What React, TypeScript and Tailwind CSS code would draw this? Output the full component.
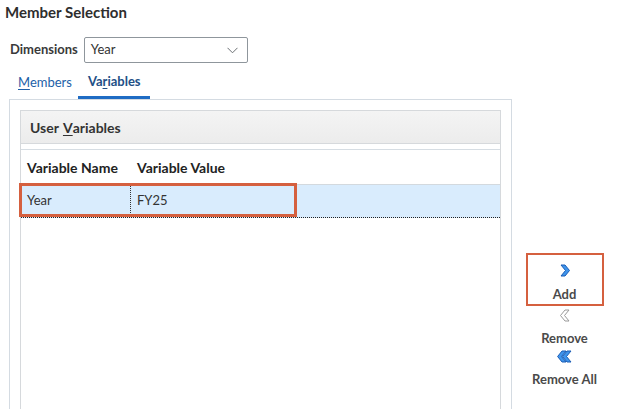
import React from 'react';

const Chevron = ({ dir, tone }: { dir: 'left' | 'right'; tone: 'blue' | 'gray' }) => {
  const pts = dir === 'right' ? '1,1 5,1 9.5,6.5 5,12 1,12 5.5,6.5' : '9,1 5,1 0.5,6.5 5,12 9,12 4.5,6.5';
  return (
    <svg width="10" height="13" viewBox="0 0 10 13">
      <polygon
        points={pts}
        fill={tone === 'blue' ? '#3f95ec' : '#ffffff'}
        stroke={tone === 'blue' ? '#1b5cb5' : '#9a9a9a'}
        strokeWidth="1"
        strokeLinejoin="round"
      />
    </svg>
  );
};

const DoubleLeft = () => (
  <svg width="15" height="13" viewBox="0 0 15 13">
    <polygon points="14,1 10,1 5.5,6.5 10,12 14,12 9.5,6.5" fill="#3f95ec" stroke="#1b5cb5" strokeLinejoin="round" />
    <polygon points="9,1 5,1 0.6,6.5 5,12 9,12 4.5,6.5" fill="#3f95ec" stroke="#1b5cb5" strokeLinejoin="round" />
  </svg>
);

export default function App() {
  return (
    <div className="w-[617px] h-[409px] overflow-hidden bg-white font-['Lato',sans-serif] text-[#333]">
      {/* titulo */}
      <h1 className="pl-[5px] pt-[3px] text-[15px] font-bold leading-[18px] text-[#2e2e2e]">Member Selection</h1>

      <div className="mt-[16px] flex items-center pl-[10px]">
        <span className="text-[13px] font-bold text-[#3a3a3a]">Dimensions</span>
        <div className="ml-[6px] flex h-[26px] w-[164px] items-center justify-between rounded-[2px] border border-[#8f969c] pl-[6px] pr-[9px]">
          <span className="text-[13px] text-[#333]">Year</span>
          <svg width="11" height="7" viewBox="0 0 11 7">
            <path d="M0.5 0.8 L5.5 5.8 L10.5 0.8" fill="none" stroke="#6b6f73" strokeWidth="1" />
          </svg>
        </div>
      </div>

      {/* tabs */}
      <div className="mt-[3px] flex h-[33px] pl-[8px]">
        <div className="flex items-center pl-[10px] pr-[6px] text-[13px] text-[#1d5fa8]">
          <span><span className="underline underline-offset-2">M</span>embers</span>
        </div>
        <div className="flex items-center border-b-[3px] border-[#1f6cc4] pl-[10px] pr-[9px] pt-[2px] text-[13px] font-bold text-[#224f86]">
          <span>Va<span className="underline underline-offset-2">r</span>iables</span>
        </div>
      </div>

      <div className="flex">
        {/* panel externo */}
        <div className="ml-[9px] h-[310px] w-[503px] border-x border-t border-[#d4dbe2] px-[10px] pt-[10px]">
          <div className="h-full border-x border-t border-[#d6d9dc]">
            <div className="flex h-[33px] items-center border-b border-[#d6d9dc] bg-gradient-to-b from-[#f4f4f4] to-[#ececec] pl-[9px] text-[14px] font-bold text-[#333]">
              User <span className="ml-[4px] underline underline-offset-2">V</span>ariables
            </div>
            <div className="mt-[5px] border-t border-[#d6dde3]">
              <div className="flex h-[34px] items-center text-[14px] font-bold text-[#222]">
                <div className="w-[110px] pl-[6px]">Variable Name</div>
                <div className="pl-[6px]">Variable Value</div>
              </div>
              <div className="relative flex h-[34px] items-center border-t border-[#d3d9de] border-b border-b-[#222] border-dotted bg-[#d9ecfd] text-[13px] text-[#333]" style={{ borderTopStyle: 'solid' }}>
                <div className="flex h-full w-[110px] items-center border-r border-dotted border-[#333] pl-[6px]">Year</div>
                <div className="pl-[6px]">FY25</div>
                <div className="absolute left-[-2px] top-[-2px] h-[34px] w-[278px] border-[3px] border-[#d5603f]" />
              </div>
            </div>
          </div>
        </div>

        {/* botoes */}
        <div className="flex flex-1 flex-col items-center pt-[154px] text-[13px] font-bold leading-[16px] text-[#4a4a4a]">
          <div className="flex h-[53px] w-[78px] flex-col items-center border-2 border-[#d5603f] pt-[9px]">
            <Chevron dir="right" tone="blue" />
            <span className="mt-[9px]">Add</span>
          </div>
          <div className="mt-[3px] h-[13px]"><Chevron dir="left" tone="gray" /></div>
          <span className="mt-[8px]">Remove</span>
          <div className="mt-[4px] h-[13px]"><DoubleLeft /></div>
          <span className="mt-[8px]">Remove All</span>
        </div>
      </div>
    </div>
  );
}
